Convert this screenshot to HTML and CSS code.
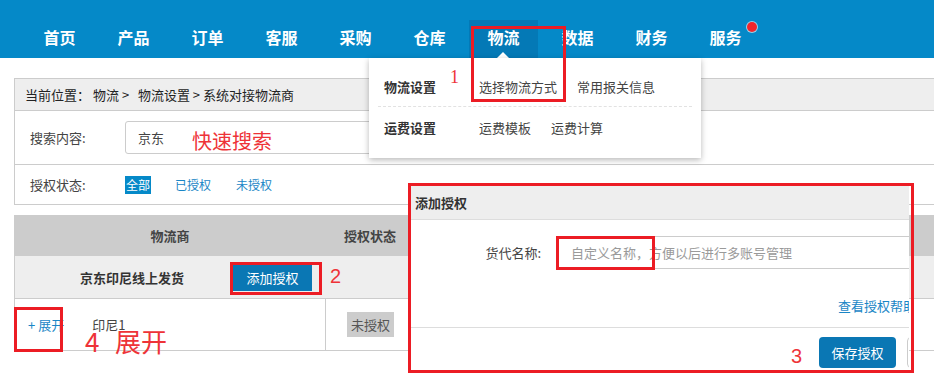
FILE: index.html
```html
<!DOCTYPE html>
<html lang="zh-CN">
<head>
    <meta charset="UTF-8">
    <title>系统对接物流商</title>
    <link rel="stylesheet" href="styles.css">
</head>
<body>
    <header class="topbar">
        <nav class="nav">
            <a class="nav-item">首页</a>
            <a class="nav-item">产品</a>
            <a class="nav-item">订单</a>
            <a class="nav-item">客服</a>
            <a class="nav-item">采购</a>
            <a class="nav-item">仓库</a>
            <a class="nav-item active">物流</a>
            <a class="nav-item">数据</a>
            <a class="nav-item">财务</a>
            <a class="nav-item dot">服务</a>
        </nav>
    </header>

    <main class="content">
        <div class="panel">
            <div class="crumbs">当前位置：<span class="crumb-path">物流 &gt;&nbsp;&nbsp; 物流设置 &gt; 系统对接物流商</span></div>
            <div class="search-row">
                <span class="label">搜索内容:</span>
                <div class="search-box">京东</div>
            </div>
            <div class="filter-row">
                <span class="label">授权状态:</span>
                <a class="filter on">全部</a>
                <a class="filter">已授权</a>
                <a class="filter">未授权</a>
            </div>
        </div>

        <div class="grid">
            <div class="grid-head">
                <div class="col-name">物流商</div>
                <div class="col-state">授权状态</div>
            </div>
            <div class="grid-group">
                <span class="group-name">京东印尼线上发货</span>
                <button class="btn-blue">添加授权</button>
            </div>
            <div class="grid-row">
                <div class="col-name row-name">
                    <a class="expand">+ 展开</a>
                    <span>印尼1</span>
                </div>
                <div class="col-state">
                    <span class="badge">未授权</span>
                </div>
            </div>
        </div>
    </main>

    <!-- 物流下拉菜单 -->
    <div class="dropdown">
        <div class="dd-row">
            <b>物流设置</b>
            <a>选择物流方式</a>
            <a>常用报关信息</a>
        </div>
        <div class="dd-row">
            <b>运费设置</b>
            <a>运费模板</a>
            <a>运费计算</a>
        </div>
    </div>

    <!-- 添加授权弹窗 -->
    <div class="modal">
        <div class="modal-head">添加授权</div>
        <div class="modal-body">
            <div class="field">
                <label>货代名称:</label>
                <input type="text" placeholder="自定义名称，方便以后进行多账号管理">
            </div>
            <a class="help">查看授权帮助</a>
        </div>
        <div class="modal-foot">
            <button class="btn-save">保存授权</button>
            <button class="btn-cancel"></button>
        </div>
    </div>

    <!-- 标注 -->
    <div class="mark mark-1"></div>
    <div class="mark mark-2"></div>
    <div class="mark mark-3"></div>
    <div class="mark mark-4"></div>
    <div class="mark mark-5"></div>
    <span class="note note-1">1</span>
    <span class="note note-search">快速搜索</span>
    <span class="note note-2">2</span>
    <span class="note note-3">3</span>
    <span class="note note-4">4&nbsp; 展开</span>
</body>
</html>
```

FILE: styles.css
```css
:root {
--lan: #0589c8;
--lan-tua: #0479b6;
--tombol: #0a77b4;
--abu: #eeeeee;
--garis: #cccccc;
--merah: #ec1c24;
--teks: #333333;
--link: #1a86c6;
}

*,
*::before,
*::after {
box-sizing: border-box;
}

body {
font-family: "Noto Sans CJK SC", "Noto Sans", sans-serif;
font-size: 13px;
color: var(--teks);
background-color: #ffffff;
margin: 0;
width: 934px;
height: 385px;
position: relative;
overflow: hidden;
}

a {
cursor: pointer;
}

/* top navigation */
.topbar {
height: 58px;
background-color: var(--lan);
}

.nav {
display: flex;
align-items: flex-end;
gap: 5px;
height: 100%;
padding-left: 25px;
}

.nav-item {
position: relative;
width: 69px;
height: 38px;
line-height: 34px;
text-align: center;
color: #fff;
font-size: 16px;
font-weight: 700;
}

.nav-item.active {
background-color: var(--lan-tua);
}

.nav-item.active::after {
content: "";
position: absolute;
left: 28px;
bottom: 0;
border: 6px solid transparent;
border-bottom-color: #fff;
border-top-width: 0;
}

.nav-item.dot::after {
content: "";
position: absolute;
left: 56px;
top: 2px;
width: 10px;
height: 10px;
border-radius: 50%;
background-color: #f2252b;
box-shadow: 0 0 0 1px rgba(255, 255, 255, 0.6);
}

/* page */
.content {
padding: 20px 0 0 14px;
}

.panel {
border: 1px solid var(--garis);
border-right: none;
}

.crumbs {
height: 32px;
line-height: 32px;
padding-left: 10px;
font-size: 13px;
color: #222;
background-color: var(--abu);
border-bottom: 1px solid var(--garis);
}

.crumb-path {
margin-left: 3px;
}

.search-row,
.filter-row {
display: flex;
align-items: center;
padding-left: 15px;
}

.search-row {
height: 54px;
border-bottom: 1px solid var(--garis);
}

.filter-row {
height: 39px;
}

.label {
width: 95px;
flex-shrink: 0;
font-size: 13px;
color: #444;
}

.search-box {
width: 480px;
height: 33px;
line-height: 31px;
padding-left: 12px;
font-size: 13px;
color: #444;
border: 1px solid var(--garis);
border-radius: 3px;
}

.filter {
margin-right: 25px;
font-size: 12px;
color: var(--link);
line-height: 18px;
}

.filter.on {
padding: 0 1px;
margin-right: 24px;
background-color: var(--lan);
color: #fff;
}

/* table */
.grid {
margin-top: 10px;
border-left: 1px solid var(--garis);
}

.grid-head {
display: flex;
height: 41px;
align-items: center;
background-color: var(--garis);
font-weight: 700;
color: #444;
}

.col-name {
width: 310px;
text-align: center;
}

.col-state {
width: 90px;
text-align: center;
}

.grid-group {
display: flex;
align-items: center;
height: 43px;
padding-left: 65px;
background-color: var(--abu);
border-bottom: 1px solid var(--garis);
}

.group-name {
font-weight: 700;
color: #333;
width: 153px;
}

.btn-blue {
width: 79px;
height: 27px;
border: none;
background-color: var(--tombol);
color: #fff;
font-family: inherit;
font-size: 13px;
padding: 0;
}

.grid-row {
display: flex;
height: 52px;
border-bottom: 1px solid var(--garis);
}

.grid-row .col-state {
display: flex;
align-items: center;
justify-content: center;
border-left: 1px solid var(--garis);
}

.row-name {
display: flex;
align-items: center;
text-align: left;
padding-left: 13px;
gap: 28px;
color: #444;
}

.expand {
color: var(--link);
}

.badge {
padding: 3px 4px;
background-color: var(--garis);
color: #555;
}

/* dropdown */
.dropdown {
position: absolute;
left: 369px;
top: 58px;
width: 332px;
height: 100px;
padding: 9px 9px 0;
background-color: #fff;
box-shadow: 0 2px 6px rgba(0, 0, 0, 0.28);
}

.dd-row {
display: flex;
align-items: center;
height: 40px;
padding-left: 6px;
color: #444;
}

.dd-row:first-child {
border-bottom: 1px dashed #e2e2e2;
}

.dd-row b {
width: 95px;
color: #333;
}

.dd-row a {
margin-right: 20px;
}

/* modal */
.modal {
position: absolute;
left: 411px;
top: 186px;
width: 498px;
height: 184px;
background-color: #fff;
overflow: hidden;
}

.modal-head {
height: 34px;
line-height: 33px;
padding-left: 4px;
font-weight: 700;
color: #333;
background-color: var(--abu);
border-bottom: 1px solid #dddddd;
}

.modal-body {
height: 108px;
padding-top: 16px;
border-bottom: 1px solid #dddddd;
}

.field {
display: flex;
align-items: center;
}

.field label {
width: 146px;
flex-shrink: 0;
padding-right: 16px;
text-align: right;
color: #444;
}

.field input {
width: 420px;
flex-shrink: 0;
height: 33px;
padding-left: 13px;
border: 1px solid var(--garis);
border-right: none;
font-family: inherit;
font-size: 13px;
outline: none;
}

.field input::placeholder {
color: #9a9a9a;
}

.help {
display: block;
margin: 27px 0 0 427px;
width: 100px;
color: var(--link);
white-space: nowrap;
}

.modal-foot {
display: flex;
gap: 11px;
padding: 9px 0 0 408px;
}

.btn-save,
.btn-cancel {
flex-shrink: 0;
height: 31px;
border-radius: 4px;
font-family: inherit;
font-size: 13px;
}

.btn-save {
width: 77px;
border: none;
background-color: var(--tombol);
color: #fff;
}

.btn-cancel {
width: 60px;
border: 1px solid var(--garis);
background-color: #fff;
}

/* annotations */
.mark {
position: absolute;
border: 3px solid var(--merah);
}

.mark-1 { left: 471px; top: 26px; width: 95px; height: 76px; }
.mark-2 { left: 230px; top: 262px; width: 92px; height: 33px; }
.mark-3 { left: 408px; top: 183px; width: 506px; height: 190px; }
.mark-4 { left: 14px; top: 307px; width: 49px; height: 45px; }
.mark-5 { left: 556px; top: 236px; width: 99px; height: 34px; }

.note {
position: absolute;
color: #ee3338;
line-height: 1;
white-space: nowrap;
}

.note-1 {
left: 450px;
top: 68px;
font-family: "Liberation Serif", serif;
font-size: 18px;
}

.note-search {
left: 192px;
top: 131px;
font-size: 20px;
}

.note-2 {
left: 330px;
top: 266px;
font-family: "Liberation Sans", sans-serif;
font-size: 20px;
}

.note-3 {
left: 791px;
top: 346px;
font-family: "Liberation Sans", sans-serif;
font-size: 20px;
}

.note-4 {
left: 85px;
top: 328px;
font-size: 26px;
word-spacing: 2px;
}
```
